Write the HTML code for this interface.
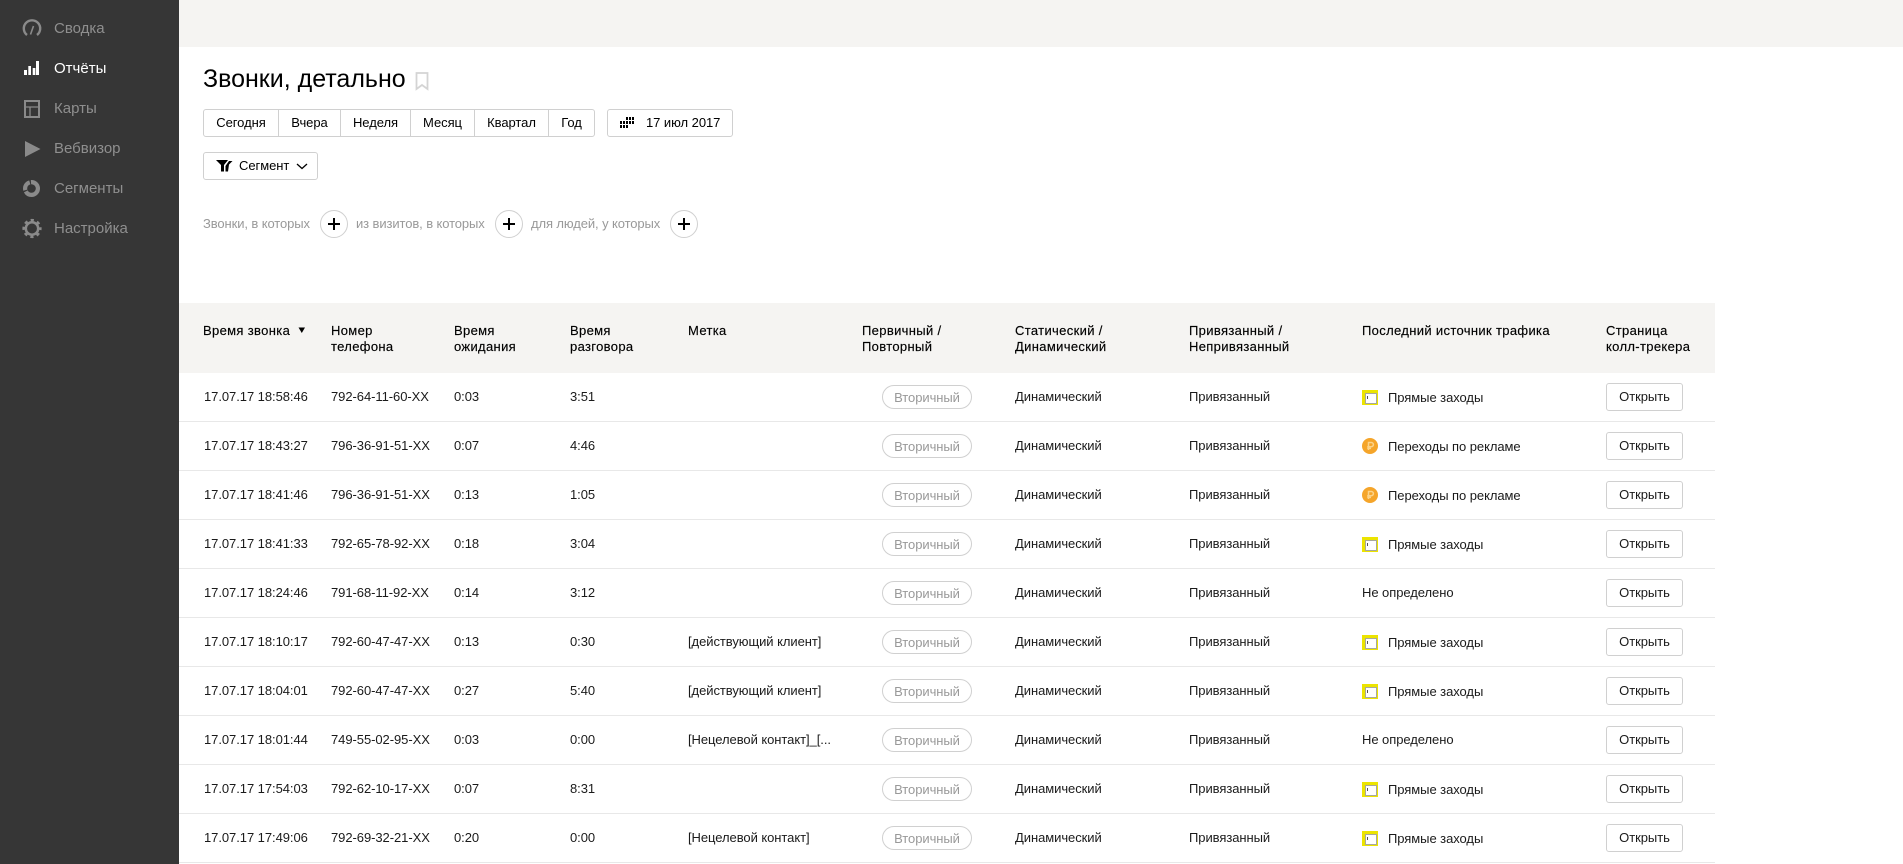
<!DOCTYPE html>
<html lang="ru">
<head>
<meta charset="utf-8">
<title>Звонки, детально</title>
<style>
*{box-sizing:border-box}
html,body{margin:0;padding:0;width:1903px;height:864px;overflow:hidden;background:#fff}
body{font-family:"Liberation Sans",Arial,sans-serif;font-size:13px;color:#000;position:relative}
.side{position:absolute;left:0;top:0;width:179px;height:864px;background:#363636}
.side a{position:absolute;left:54px;font-size:15px;line-height:20px;color:#8f8f8f;white-space:nowrap}
.side a.on{color:#fff}
.side svg{position:absolute;left:0;top:0}
.top{position:absolute;left:179px;top:0;width:1724px;height:47px;background:#f5f4f2}
h1{position:absolute;left:203px;top:64px;margin:0;font-size:25px;font-weight:400;line-height:30px;white-space:nowrap}
.bm{position:absolute;left:415px;top:72px}
.btn{position:absolute;height:28px;border:1px solid #d0d0d0;border-radius:3px;background:#fff;line-height:26px;white-space:nowrap;letter-spacing:-.05px}
.grp span{position:absolute;top:0;height:26px;text-align:center;border-right:1px solid #d0d0d0}
.grp span:last-child{border-right:0}
.hint{position:absolute;top:214px;line-height:20px;color:#999;white-space:nowrap;font-size:13px;letter-spacing:-.1px}
.plus{position:absolute;top:210px;width:28px;height:28px;border:1px solid #d0d0d0;border-radius:50%;background:#fff}
.plus:before{content:"";position:absolute;left:7px;top:12px;width:12px;height:2px;background:#000}
.plus:after{content:"";position:absolute;left:12px;top:7px;width:2px;height:12px;background:#000}
.head{position:absolute;left:179px;top:303px;width:1536px;height:70px;background:#f5f4f2}
.head b{position:absolute;top:20px;font-weight:400;line-height:15.5px;white-space:nowrap;letter-spacing:.34px;-webkit-text-stroke:.15px #000}
.r{position:absolute;left:179px;width:1536px;height:49px;border-bottom:1px solid #e8e8e8;color:#1a1a1a;letter-spacing:-.06px}
.r i{font-style:normal;position:absolute;top:0;line-height:48px;white-space:nowrap}
.c1{left:25px}.c2{left:152px}.c3{left:275px}.c4{left:391px}.c5{left:509px}.c7{left:836px}.c8{left:1010px}
.c9{left:1183px}.c9.s{left:1209px;top:1px}
.pill{position:absolute;left:703px;top:12px;width:90px;height:24px;border:1px solid #d0d0d0;border-radius:12px;color:#999;text-align:center;line-height:24px}
.open{position:absolute;left:1427px;top:10px;width:77px;height:28px;border:1px solid #d0d0d0;border-radius:3px;text-align:center;line-height:26px;background:#fff}
.ya{position:absolute;left:1183px;top:17px;width:16px;height:15px;background:#ece400;padding:3px}
.ya:before{content:"";display:block;width:10px;height:9px;background:#fff;border:1px solid #a8a89c}
.ya:after{content:"";position:absolute;left:5px;top:6px;width:1px;height:3px;background:#555}
.coin{position:absolute;left:1183px;top:16px;width:16px;height:16px}
</style>
</head>
<body>
<div class="side">
<svg width="60" height="250" viewBox="0 0 60 250">
<g fill="none" stroke="#8a8a8a">
<path d="M27 35A8.2 8.2 0 1 1 37 35" stroke-width="2.4"/>
<path d="M30.5 34.5L33.5 26" stroke-width="1.6"/>
<rect x="25" y="101" width="14" height="16" stroke-width="2"/>
<path d="M25 107H39M30 107V117" stroke-width="1.3"/>
<circle cx="31.5" cy="188.5" r="6.4" stroke-width="4.2" stroke-dasharray="17 1.2 10 1.2 11 1.2"/>
<circle cx="32" cy="228.5" r="6.2" stroke-width="2.5"/>
<circle cx="32" cy="228.5" r="8.3" stroke-width="2.6" stroke-dasharray="3.2 3.32" stroke-dashoffset="1.6"/>
</g>
<path d="M25 141L40.5 149 25 157Z" fill="#8a8a8a"/>
<g fill="#fff"><rect x="24" y="70" width="3" height="5"/><rect x="28.3" y="66" width="2.7" height="9"/><rect x="32.7" y="68" width="2.7" height="7"/><rect x="36" y="61" width="3" height="14"/></g>
</svg>
<a style="top:19px">Сводка</a>
<a class="on" style="top:59px">Отчёты</a>
<a style="top:99px">Карты</a>
<a style="top:139px">Вебвизор</a>
<a style="top:179px">Сегменты</a>
<a style="top:219px">Настройка</a>
</div>
<div class="top"></div>
<h1>Звонки, детально</h1>
<svg class="bm" width="14" height="19" viewBox="0 0 14 19"><path d="M1.5 1H12.5V17L7 13 1.5 17Z" fill="none" stroke="#d4d4d4" stroke-width="1.8"/></svg>

<div class="btn grp" style="left:203px;top:109px;width:392px">
<span style="left:0;width:75px">Сегодня</span>
<span style="left:75px;width:62px">Вчера</span>
<span style="left:137px;width:70px">Неделя</span>
<span style="left:207px;width:64px">Месяц</span>
<span style="left:271px;width:74px">Квартал</span>
<span style="left:345px;width:45px">Год</span>
</div>
<div class="btn" style="left:607px;top:109px;width:126px">
<svg style="position:absolute;left:12px;top:7px" width="16" height="12" viewBox="0 0 16 12" fill="#000"><path d="M6 0h2v3H6zM9 0h2v3H9zM12 0h2v3h-2zM0 4h2v3H0zM3 4h2v3H3zM6 4h2v3H6zM9 4h2v3H9zM12 4h2v3h-2zM0 8h2v3H0zM3 8h2v3H3zM6 8h2v3H6z"/></svg>
<span style="position:absolute;left:38px;top:0">17 июл 2017</span>
</div>
<div class="btn" style="left:203px;top:152px;width:115px">
<svg style="position:absolute;left:12px;top:7px" width="17" height="12" viewBox="0 0 17 12" fill="#000"><path d="M0 0H12L8 5V11.5H5V5Z"/><path d="M13 1H16.5L13 4.5 12 11.5H9.5V6Z"/></svg>
<span style="position:absolute;left:35px;top:0">Сегмент</span>
<svg style="position:absolute;left:92px;top:10px" width="12" height="7" viewBox="0 0 12 7"><path d="M1 1L6 5.5 11 1" fill="none" stroke="#000" stroke-width="1.3"/></svg>
</div>

<div class="hint" style="left:203px">Звонки, в которых</div>
<div class="plus" style="left:320px"></div>
<div class="hint" style="left:356px">из визитов, в которых</div>
<div class="plus" style="left:495px"></div>
<div class="hint" style="left:531px">для людей, у которых</div>
<div class="plus" style="left:670px"></div>

<div class="head">
<b style="left:24px">Время звонка<svg style="position:absolute;left:95px;top:4px" width="8" height="7" viewBox="0 0 8 7"><path d="M0.5 0.5H7L3.8 6Z" fill="#000"/></svg></b>
<b style="left:152px">Номер<br>телефона</b>
<b style="left:275px">Время<br>ожидания</b>
<b style="left:391px">Время<br>разговора</b>
<b style="left:509px">Метка</b>
<b style="left:683px">Первичный /<br>Повторный</b>
<b style="left:836px">Статический /<br>Динамический</b>
<b style="left:1010px">Привязанный /<br>Непривязанный</b>
<b style="left:1183px">Последний источник трафика</b>
<b style="left:1427px">Страница<br>колл-трекера</b>
</div>

<div class="r" style="top:373px"><i class="c1">17.07.17 18:58:46</i><i class="c2">792-64-11-60-XX</i><i class="c3">0:03</i><i class="c4">3:51</i><span class="pill">Вторичный</span><i class="c7">Динамический</i><i class="c8">Привязанный</i><span class="ya"></span><i class="c9 s">Прямые заходы</i><span class="open">Открыть</span></div>
<div class="r" style="top:422px"><i class="c1">17.07.17 18:43:27</i><i class="c2">796-36-91-51-XX</i><i class="c3">0:07</i><i class="c4">4:46</i><span class="pill">Вторичный</span><i class="c7">Динамический</i><i class="c8">Привязанный</i><svg class="coin" viewBox="0 0 16 16"><circle cx="8" cy="8" r="8" fill="#f5a52a"/><path d="M6.5 12V4.5H9.3a2 2 0 0 1 0 4.2H5.2M5.2 10.4H9" fill="none" stroke="#fcd48a" stroke-width="1.5"/></svg><i class="c9 s">Переходы по рекламе</i><span class="open">Открыть</span></div>
<div class="r" style="top:471px"><i class="c1">17.07.17 18:41:46</i><i class="c2">796-36-91-51-XX</i><i class="c3">0:13</i><i class="c4">1:05</i><span class="pill">Вторичный</span><i class="c7">Динамический</i><i class="c8">Привязанный</i><svg class="coin" viewBox="0 0 16 16"><circle cx="8" cy="8" r="8" fill="#f5a52a"/><path d="M6.5 12V4.5H9.3a2 2 0 0 1 0 4.2H5.2M5.2 10.4H9" fill="none" stroke="#fcd48a" stroke-width="1.5"/></svg><i class="c9 s">Переходы по рекламе</i><span class="open">Открыть</span></div>
<div class="r" style="top:520px"><i class="c1">17.07.17 18:41:33</i><i class="c2">792-65-78-92-XX</i><i class="c3">0:18</i><i class="c4">3:04</i><span class="pill">Вторичный</span><i class="c7">Динамический</i><i class="c8">Привязанный</i><span class="ya"></span><i class="c9 s">Прямые заходы</i><span class="open">Открыть</span></div>
<div class="r" style="top:569px"><i class="c1">17.07.17 18:24:46</i><i class="c2">791-68-11-92-XX</i><i class="c3">0:14</i><i class="c4">3:12</i><span class="pill">Вторичный</span><i class="c7">Динамический</i><i class="c8">Привязанный</i><i class="c9">Не определено</i><span class="open">Открыть</span></div>
<div class="r" style="top:618px"><i class="c1">17.07.17 18:10:17</i><i class="c2">792-60-47-47-XX</i><i class="c3">0:13</i><i class="c4">0:30</i><i class="c5">[действующий клиент]</i><span class="pill">Вторичный</span><i class="c7">Динамический</i><i class="c8">Привязанный</i><span class="ya"></span><i class="c9 s">Прямые заходы</i><span class="open">Открыть</span></div>
<div class="r" style="top:667px"><i class="c1">17.07.17 18:04:01</i><i class="c2">792-60-47-47-XX</i><i class="c3">0:27</i><i class="c4">5:40</i><i class="c5">[действующий клиент]</i><span class="pill">Вторичный</span><i class="c7">Динамический</i><i class="c8">Привязанный</i><span class="ya"></span><i class="c9 s">Прямые заходы</i><span class="open">Открыть</span></div>
<div class="r" style="top:716px"><i class="c1">17.07.17 18:01:44</i><i class="c2">749-55-02-95-XX</i><i class="c3">0:03</i><i class="c4">0:00</i><i class="c5">[Нецелевой контакт]_[...</i><span class="pill">Вторичный</span><i class="c7">Динамический</i><i class="c8">Привязанный</i><i class="c9">Не определено</i><span class="open">Открыть</span></div>
<div class="r" style="top:765px"><i class="c1">17.07.17 17:54:03</i><i class="c2">792-62-10-17-XX</i><i class="c3">0:07</i><i class="c4">8:31</i><span class="pill">Вторичный</span><i class="c7">Динамический</i><i class="c8">Привязанный</i><span class="ya"></span><i class="c9 s">Прямые заходы</i><span class="open">Открыть</span></div>
<div class="r" style="top:814px"><i class="c1">17.07.17 17:49:06</i><i class="c2">792-69-32-21-XX</i><i class="c3">0:20</i><i class="c4">0:00</i><i class="c5">[Нецелевой контакт]</i><span class="pill">Вторичный</span><i class="c7">Динамический</i><i class="c8">Привязанный</i><span class="ya"></span><i class="c9 s">Прямые заходы</i><span class="open">Открыть</span></div>
</body>
</html>
